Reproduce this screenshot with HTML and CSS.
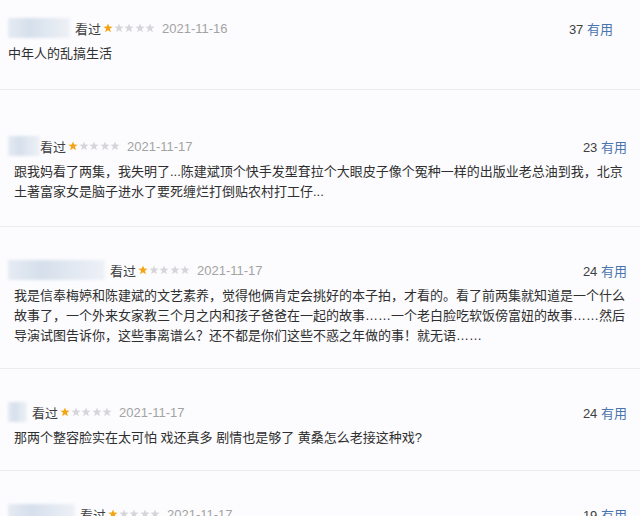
FILE: index.html
```html
<!DOCTYPE html>
<html lang="zh-CN">
<head>
  <meta charset="UTF-8">
  <meta name="viewport" content="width=device-width, initial-scale=1.0">
  <title>短评</title>
  <link rel="stylesheet" href="styles.css">
</head>
<body>
  <div class="comments">

    <div class="comment comment-first">
      <div class="comment-info">
        <div class="meta">
          <span class="user" style="width: 62px"></span>
          <span class="status">看过</span>
          <span class="stars">
            <svg viewBox="0 0 10 10"><polygon class="on" points="5,0.4 6.2,3.6 9.6,3.7 6.9,5.8 7.9,9.3 5,7.3 2.1,9.3 3.1,5.8 0.4,3.7 3.8,3.6"/></svg>
            <svg viewBox="0 0 10 10"><polygon points="5,0.4 6.2,3.6 9.6,3.7 6.9,5.8 7.9,9.3 5,7.3 2.1,9.3 3.1,5.8 0.4,3.7 3.8,3.6"/></svg>
            <svg viewBox="0 0 10 10"><polygon points="5,0.4 6.2,3.6 9.6,3.7 6.9,5.8 7.9,9.3 5,7.3 2.1,9.3 3.1,5.8 0.4,3.7 3.8,3.6"/></svg>
            <svg viewBox="0 0 10 10"><polygon points="5,0.4 6.2,3.6 9.6,3.7 6.9,5.8 7.9,9.3 5,7.3 2.1,9.3 3.1,5.8 0.4,3.7 3.8,3.6"/></svg>
            <svg viewBox="0 0 10 10"><polygon points="5,0.4 6.2,3.6 9.6,3.7 6.9,5.8 7.9,9.3 5,7.3 2.1,9.3 3.1,5.8 0.4,3.7 3.8,3.6"/></svg>
          </span>
          <span class="time">2021-11-16</span>
        </div>
        <div class="votes"><span class="count">37</span> <a href="#">有用</a></div>
      </div>
      <p class="short">中年人的乱搞生活</p>
    </div>

    <div class="comment comment-second">
      <div class="comment-info">
        <div class="meta">
          <span class="user user-tight" style="width: 32px"></span>
          <span class="status">看过</span>
          <span class="stars">
            <svg viewBox="0 0 10 10"><polygon class="on" points="5,0.4 6.2,3.6 9.6,3.7 6.9,5.8 7.9,9.3 5,7.3 2.1,9.3 3.1,5.8 0.4,3.7 3.8,3.6"/></svg>
            <svg viewBox="0 0 10 10"><polygon points="5,0.4 6.2,3.6 9.6,3.7 6.9,5.8 7.9,9.3 5,7.3 2.1,9.3 3.1,5.8 0.4,3.7 3.8,3.6"/></svg>
            <svg viewBox="0 0 10 10"><polygon points="5,0.4 6.2,3.6 9.6,3.7 6.9,5.8 7.9,9.3 5,7.3 2.1,9.3 3.1,5.8 0.4,3.7 3.8,3.6"/></svg>
            <svg viewBox="0 0 10 10"><polygon points="5,0.4 6.2,3.6 9.6,3.7 6.9,5.8 7.9,9.3 5,7.3 2.1,9.3 3.1,5.8 0.4,3.7 3.8,3.6"/></svg>
            <svg viewBox="0 0 10 10"><polygon points="5,0.4 6.2,3.6 9.6,3.7 6.9,5.8 7.9,9.3 5,7.3 2.1,9.3 3.1,5.8 0.4,3.7 3.8,3.6"/></svg>
          </span>
          <span class="time">2021-11-17</span>
        </div>
        <div class="votes"><span class="count">23</span> <a href="#">有用</a></div>
      </div>
      <p class="short">跟我妈看了两集，我失明了...陈建斌顶个快手发型耷拉个大眼皮子像个冤种一样的出版业老总油到我，北京土著富家女是脑子进水了要死缠烂打倒贴农村打工仔...</p>
    </div>

    <div class="comment">
      <div class="comment-info">
        <div class="meta">
          <span class="user" style="width: 97px"></span>
          <span class="status">看过</span>
          <span class="stars">
            <svg viewBox="0 0 10 10"><polygon class="on" points="5,0.4 6.2,3.6 9.6,3.7 6.9,5.8 7.9,9.3 5,7.3 2.1,9.3 3.1,5.8 0.4,3.7 3.8,3.6"/></svg>
            <svg viewBox="0 0 10 10"><polygon points="5,0.4 6.2,3.6 9.6,3.7 6.9,5.8 7.9,9.3 5,7.3 2.1,9.3 3.1,5.8 0.4,3.7 3.8,3.6"/></svg>
            <svg viewBox="0 0 10 10"><polygon points="5,0.4 6.2,3.6 9.6,3.7 6.9,5.8 7.9,9.3 5,7.3 2.1,9.3 3.1,5.8 0.4,3.7 3.8,3.6"/></svg>
            <svg viewBox="0 0 10 10"><polygon points="5,0.4 6.2,3.6 9.6,3.7 6.9,5.8 7.9,9.3 5,7.3 2.1,9.3 3.1,5.8 0.4,3.7 3.8,3.6"/></svg>
            <svg viewBox="0 0 10 10"><polygon points="5,0.4 6.2,3.6 9.6,3.7 6.9,5.8 7.9,9.3 5,7.3 2.1,9.3 3.1,5.8 0.4,3.7 3.8,3.6"/></svg>
          </span>
          <span class="time">2021-11-17</span>
        </div>
        <div class="votes"><span class="count">24</span> <a href="#">有用</a></div>
      </div>
      <p class="short">我是信奉梅婷和陈建斌的文艺素养，觉得他俩肯定会挑好的本子拍，才看的。看了前两集就知道是一个什么故事了，一个外来女家教三个月之内和孩子爸爸在一起的故事……一个老白脸吃软饭傍富妞的故事……然后导演试图告诉你，这些事离谱么？还不都是你们这些不惑之年做的事！就无语……</p>
    </div>

    <div class="comment">
      <div class="comment-info">
        <div class="meta">
          <span class="user" style="width: 19px"></span>
          <span class="status">看过</span>
          <span class="stars">
            <svg viewBox="0 0 10 10"><polygon class="on" points="5,0.4 6.2,3.6 9.6,3.7 6.9,5.8 7.9,9.3 5,7.3 2.1,9.3 3.1,5.8 0.4,3.7 3.8,3.6"/></svg>
            <svg viewBox="0 0 10 10"><polygon points="5,0.4 6.2,3.6 9.6,3.7 6.9,5.8 7.9,9.3 5,7.3 2.1,9.3 3.1,5.8 0.4,3.7 3.8,3.6"/></svg>
            <svg viewBox="0 0 10 10"><polygon points="5,0.4 6.2,3.6 9.6,3.7 6.9,5.8 7.9,9.3 5,7.3 2.1,9.3 3.1,5.8 0.4,3.7 3.8,3.6"/></svg>
            <svg viewBox="0 0 10 10"><polygon points="5,0.4 6.2,3.6 9.6,3.7 6.9,5.8 7.9,9.3 5,7.3 2.1,9.3 3.1,5.8 0.4,3.7 3.8,3.6"/></svg>
            <svg viewBox="0 0 10 10"><polygon points="5,0.4 6.2,3.6 9.6,3.7 6.9,5.8 7.9,9.3 5,7.3 2.1,9.3 3.1,5.8 0.4,3.7 3.8,3.6"/></svg>
          </span>
          <span class="time">2021-11-17</span>
        </div>
        <div class="votes"><span class="count">24</span> <a href="#">有用</a></div>
      </div>
      <p class="short">那两个整容脸实在太可怕 戏还真多 剧情也是够了 黄桑怎么老接这种戏?</p>
    </div>

    <div class="comment">
      <div class="comment-info">
        <div class="meta">
          <span class="user" style="width: 67px"></span>
          <span class="status">看过</span>
          <span class="stars">
            <svg viewBox="0 0 10 10"><polygon class="on" points="5,0.4 6.2,3.6 9.6,3.7 6.9,5.8 7.9,9.3 5,7.3 2.1,9.3 3.1,5.8 0.4,3.7 3.8,3.6"/></svg>
            <svg viewBox="0 0 10 10"><polygon points="5,0.4 6.2,3.6 9.6,3.7 6.9,5.8 7.9,9.3 5,7.3 2.1,9.3 3.1,5.8 0.4,3.7 3.8,3.6"/></svg>
            <svg viewBox="0 0 10 10"><polygon points="5,0.4 6.2,3.6 9.6,3.7 6.9,5.8 7.9,9.3 5,7.3 2.1,9.3 3.1,5.8 0.4,3.7 3.8,3.6"/></svg>
            <svg viewBox="0 0 10 10"><polygon points="5,0.4 6.2,3.6 9.6,3.7 6.9,5.8 7.9,9.3 5,7.3 2.1,9.3 3.1,5.8 0.4,3.7 3.8,3.6"/></svg>
            <svg viewBox="0 0 10 10"><polygon points="5,0.4 6.2,3.6 9.6,3.7 6.9,5.8 7.9,9.3 5,7.3 2.1,9.3 3.1,5.8 0.4,3.7 3.8,3.6"/></svg>
          </span>
          <span class="time">2021-11-17</span>
        </div>
        <div class="votes"><span class="count">19</span> <a href="#">有用</a></div>
      </div>
      <p class="short">&nbsp;</p>
    </div>

  </div>
</body>
</html>
```

FILE: styles.css
```css
body {
  margin: 0;
  padding: 0;
  background-color: #fcfcfe;
  font-family: "Liberation Sans", "Noto Sans CJK SC", sans-serif;
  font-size: 13px;
  color: #2f2f2f;
  height: 516px;
  overflow: hidden;
}
.comments {
  width: 640px;
}
.comment {
  padding: 33px 13px 22px 8px;
  border-bottom: 1px solid #ececef;
}
.comment-first {
  padding-top: 18px;
  padding-right: 27px;
  padding-bottom: 25px;
}
.comment-second {
  padding-top: 46px;
  padding-bottom: 24px;
}
.comment-info {
  display: flex;
  justify-content: space-between;
  align-items: center;
  height: 20px;
}
.meta {
  display: flex;
  align-items: center;
  height: 20px;
}
.user {
  display: inline-block;
  height: 20px;
  margin-right: 5px;
  background: linear-gradient(90deg, #e6ebf3 0%, #d5dfeb 35%, #e1e8f1 65%, #eef1f6 100%);
  filter: blur(1.5px);
}
.user-tight {
  margin-right: 0;
}
.status {
  color: #404040;
  margin-right: 2px;
}
.stars {
  display: flex;
  gap: 0.5px;
  margin-right: 7px;
}
.stars svg {
  width: 10px;
  height: 10px;
}
.stars polygon {
  fill: #d6d6da;
}
.stars polygon.on {
  fill: #f2a413;
}
.time {
  color: #a3a3a3;
  font-size: 13px;
}
.votes {
  color: #404040;
}
.votes a {
  color: #4a74ad;
  text-decoration: none;
}
.short {
  margin: 6px 0 0 6px;
  line-height: 20px;
}
.comment-first .short {
  margin-left: 0;
}
```
